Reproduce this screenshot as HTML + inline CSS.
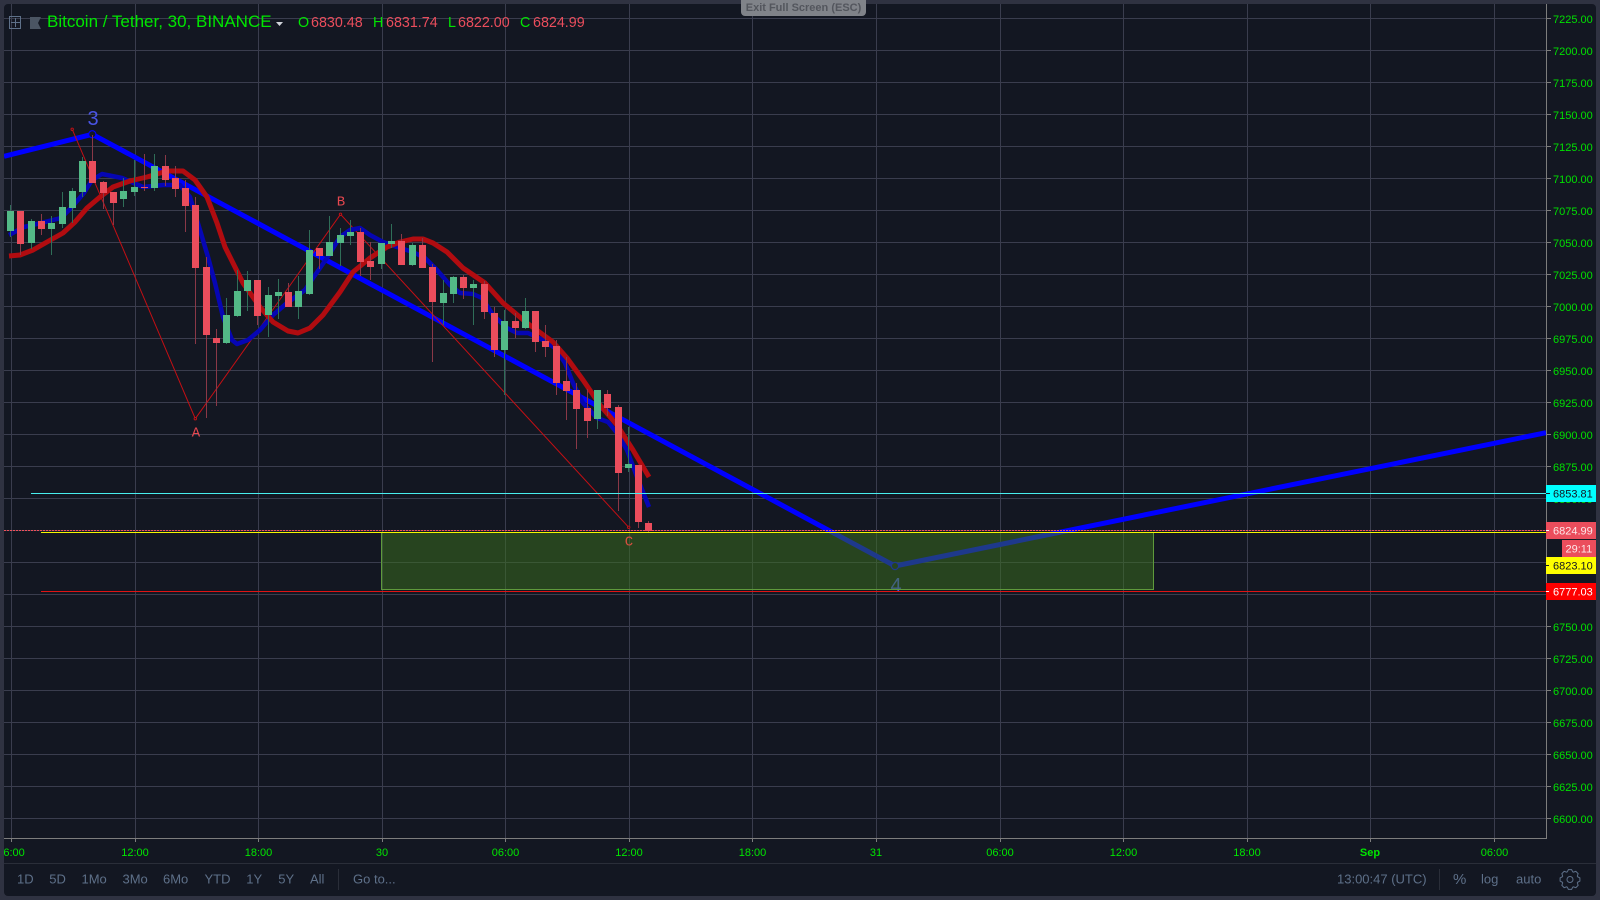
<!DOCTYPE html>
<html lang="en">
<head>
<meta charset="utf-8">
<title>BTCUSDT chart</title>
<style>
html,body{margin:0;padding:0;width:1600px;height:900px;overflow:hidden;background:#2f3241}
svg{display:block;font-family:"Liberation Sans",sans-serif}
.g{stroke:#3a3d4e;stroke-width:1;fill:none;shape-rendering:crispEdges}
.p text{font-size:11px;fill:#00e000}
.t text{font-size:11px;fill:#00e600;text-anchor:middle}
.b text{font-size:13px;fill:#5e7089}
.v{font-size:14.3px;fill:#eb4d5c}
.l{font-size:14.3px;fill:#00e600}
</style>
</head>
<body>
<svg width="1600" height="900" viewBox="0 0 1600 900" xmlns="http://www.w3.org/2000/svg">
<defs><clipPath id="c"><rect x="4" y="4" width="1592" height="892" rx="4"/></clipPath></defs>
<rect width="1600" height="900" fill="#2f3241"/>
<rect x="4" y="4" width="1592" height="892" rx="4" fill="#131722"/>
<g clip-path="url(#c)">
<!-- grid -->
<path class="g" d="M4 18.5H1546M4 50.5H1546M4 82.5H1546M4 114.5H1546M4 146.5H1546M4 178.5H1546M4 210.5H1546M4 242.5H1546M4 274.5H1546M4 306.5H1546M4 338.5H1546M4 370.5H1546M4 402.5H1546M4 434.5H1546M4 466.5H1546M4 498.5H1546M4 530.5H1546M4 562.5H1546M4 594.5H1546M4 626.5H1546M4 658.5H1546M4 690.5H1546M4 722.5H1546M4 754.5H1546M4 786.5H1546M4 818.5H1546"/>
<path class="g" d="M11.5 4V838M135.5 4V838M258.5 4V838M382.5 4V838M505.5 4V838M629.5 4V838M752.5 4V838M876.5 4V838M1000.5 4V838M1123.5 4V838M1247.5 4V838M1370.5 4V838M1494.5 4V838"/>

<!-- thick blue wave -->
<polyline points="4,156.3 92.3,134.3 895,566 1546,432.7" fill="none" stroke="#0000ff" stroke-width="5" stroke-linejoin="round"/>
<circle cx="92.3" cy="134.3" r="3.6" fill="#131722" stroke="#0000ff" stroke-width="1.2"/>
<circle cx="895" cy="566" r="3.6" fill="#131722" stroke="#0000ff" stroke-width="1.2"/>

<!-- thin red ABC -->
<polyline points="72.2,129.3 195.3,418.7 340.5,214.3 628.7,527.3" fill="none" stroke="#c40f14" stroke-width="1"/>
<circle cx="72.2" cy="129.3" r="1.2" fill="#131722" stroke="#c01015"/>
<circle cx="195.3" cy="418.7" r="1.2" fill="#131722" stroke="#c01015"/>
<circle cx="340.5" cy="214.3" r="1.2" fill="#131722" stroke="#c01015"/>
<circle cx="628.7" cy="527.3" r="1.2" fill="#131722" stroke="#c01015"/>

<!-- blue MA -->
<polyline fill="none" stroke="#0606b4" stroke-width="4.5" stroke-linejoin="round" stroke-linecap="butt" points="9,235 24,227 41,223 61,218 71,208 84,193 92,180 102,174 122,178 143,187 163,185 180,185 190,197 200,230 208,257 215,283 223,317 232,340 237,344 248,340 260,330 273,315 287,303 305,290 313,278 327,258 340,237 350,230 360,228 370,235 383,242 397,247 413,252 425,258 437,270 450,285 460,293 473,294 482,298 493,315 507,328 517,333 528,333 543,340 555,348 565,363 573,383 583,403 597,418 608,422 617,433 627,450 637,477 649,507"/>
<!-- red MA -->
<polyline fill="none" stroke="#b10c10" stroke-width="5" stroke-linejoin="round" stroke-linecap="butt" points="9,256 20,255 33,250 47,242 63,233 75,222 87,208 100,197 113,187 130,181 147,177 167,171 183,171 195,180 207,197 217,223 225,247 243,283 260,307 273,322 288,331 298,333 310,328 323,315 340,292 353,272 370,258 387,247 400,242 413,239 423,239 433,243 447,252 463,268 485,283 503,303 527,323 553,342 567,358 583,380 600,405 617,425 633,450 649,477"/>

<!-- wicks -->
<path fill="none" stroke="#2f6e58" stroke-width="1" shape-rendering="crispEdges" d="M10.5 205V237M31.5 219V249M51.5 216V255M62.5 192V228M72.5 188V223M82.5 157V197M123.5 178V207M134.5 160V196M154.5 154V191M226.5 298V344M237.5 270V317M247.5 271V311M268.5 287V337M278.5 279V319M298.5 276V319M309.5 230V295M329.5 216V256M340.5 228V266M350.5 220V245M381.5 243V269M391.5 224V248M412.5 243V266M443.5 280V325M453.5 276V303M473.5 280V325M504.5 310V395M525.5 298V329M597.5 390V429M628.5 427V472"/>
<path fill="none" stroke="#8a3847" stroke-width="1" shape-rendering="crispEdges" d="M20.5 211V255M41.5 214V235M92.5 135V183M103.5 181V209M113.5 192V225M144.5 154V191M165.5 155V186M175.5 166V197M185.5 180V232M195.5 197V344M206.5 257V418M216.5 329V406M257.5 280V325M288.5 283V307M319.5 248V269M360.5 228V276M370.5 242V280M401.5 234V265M422.5 238V268M432.5 264V362M463.5 275V299M484.5 281V319M494.5 307V357M515.5 313V338M535.5 311V352M545.5 325V357M556.5 340V395M566.5 357V420M576.5 383V449M587.5 389V438M607.5 390V416M618.5 405V511M638.5 465V528M648.5 521V533"/>
<!-- bodies -->
<path fill="#53b987" shape-rendering="crispEdges" d="M7 211h7V231h-7zM28 221h7V243h-7zM48 223h7V229h-7zM59 207h7V224h-7zM69 191h7V208h-7zM79 161h7V192h-7zM120 191h7V199h-7zM131 187h7V192h-7zM151 166h7V188h-7zM223 315h7V343h-7zM234 291h7V316h-7zM244 280h7V291h-7zM265 295h7V315h-7zM275 292h7V296h-7zM295 291h7V307h-7zM306 250h7V294h-7zM326 242h7V256h-7zM337 235h7V243h-7zM347 232h7V236h-7zM378 243h7V264h-7zM388 241h7V244h-7zM409 245h7V265h-7zM440 293h7V303h-7zM450 277h7V294h-7zM470 284h7V288h-7zM501 321h7V350h-7zM522 311h7V328h-7zM594 390h7V419h-7zM625 464h7V468h-7z"/>
<path fill="#eb4d5c" shape-rendering="crispEdges" d="M17 211h7V244h-7zM38 221h7V229h-7zM89 161h7V183h-7zM100 182h7V193h-7zM110 192h7V203h-7zM141 187h7V188h-7zM162 166h7V180h-7zM172 178h7V189h-7zM182 188h7V206h-7zM192 205h7V268h-7zM203 267h7V335h-7zM213 338h7V343h-7zM254 280h7V316h-7zM285 292h7V307h-7zM316 248h7V256h-7zM357 232h7V262h-7zM367 261h7V267h-7zM398 241h7V265h-7zM419 245h7V268h-7zM429 267h7V302h-7zM460 277h7V288h-7zM481 284h7V312h-7zM491 313h7V350h-7zM512 321h7V328h-7zM532 311h7V342h-7zM542 341h7V347h-7zM553 346h7V383h-7zM563 381h7V391h-7zM573 390h7V409h-7zM584 408h7V421h-7zM604 394h7V408h-7zM615 407h7V473h-7zM635 465h7V522h-7zM645 523h7V531h-7z"/>

<!-- labels under rect -->
<text x="93" y="125" font-size="20" fill="#4a55e6" text-anchor="middle">3</text>
<text x="896" y="592" font-size="20" fill="#4a55e6" text-anchor="middle">4</text>
<text x="196" y="436.5" font-size="14" fill="#e6474f" text-anchor="middle" font-family="Liberation Mono, monospace">A</text>
<text x="341" y="205.5" font-size="14" fill="#e6474f" text-anchor="middle" font-family="Liberation Mono, monospace">B</text>

<!-- target rect -->
<rect x="381.5" y="532.5" width="772" height="57" fill="#3a6f1e" fill-opacity="0.51" stroke="#5f9a3c" stroke-width="1" shape-rendering="crispEdges"/>
<text x="629" y="545.5" font-size="14" fill="#d85040" text-anchor="middle" font-family="Liberation Mono, monospace">C</text>

<!-- horizontal lines -->
<g shape-rendering="crispEdges">
<path d="M31 493.5H1546" stroke="#48eeee" stroke-width="1"/>
<path d="M4 530.5H1546" stroke="#f0505c" stroke-width="1" stroke-dasharray="2 1"/>
<path d="M41 532.5H1546" stroke="#f5f500" stroke-width="1"/>
<path d="M41 591.5H1546" stroke="#e01414" stroke-width="1"/>
</g>

<!-- header -->
<g fill="none" stroke="#5e7089" stroke-width="1" shape-rendering="crispEdges">
<rect x="9.5" y="16.5" width="11" height="12"/>
<path d="M15.5 18V27M11 22.5H20"/>
</g>
<path d="M30 17H41L38 23L41 29H30Z" fill="#4b5563"/>
<text x="47" y="27" font-size="17" fill="#00e600">Bitcoin / Tether, 30, BINANCE</text>
<path d="M276 22h7l-3.5 4z" fill="#d0d3da"/>
<text class="l" x="298" y="27">O</text><text class="v" x="311" y="27">6830.48</text>
<text class="l" x="373" y="27">H</text><text class="v" x="386" y="27">6831.74</text>
<text class="l" x="448" y="27">L</text><text class="v" x="458" y="27">6822.00</text>
<text class="l" x="520" y="27">C</text><text class="v" x="533" y="27">6824.99</text>

<!-- axes -->
<path d="M1546.5 4V838.5H4" fill="none" stroke="#7d7d7d" stroke-width="1" shape-rendering="crispEdges"/>
<path fill="none" stroke="#7d7d7d" stroke-width="1" shape-rendering="crispEdges" d="M1547 18.5h4M1547 50.5h4M1547 82.5h4M1547 114.5h4M1547 146.5h4M1547 178.5h4M1547 210.5h4M1547 242.5h4M1547 274.5h4M1547 306.5h4M1547 338.5h4M1547 370.5h4M1547 402.5h4M1547 434.5h4M1547 466.5h4M1547 626.5h4M1547 658.5h4M1547 690.5h4M1547 722.5h4M1547 754.5h4M1547 786.5h4M1547 818.5h4M11.5 838v4M135.5 838v4M258.5 838v4M382.5 838v4M505.5 838v4M629.5 838v4M752.5 838v4M876.5 838v4M1000.5 838v4M1123.5 838v4M1247.5 838v4M1370.5 838v4M1494.5 838v4"/>
<g class="p">
<text x="1553" y="23">7225.00</text><text x="1553" y="55">7200.00</text><text x="1553" y="87">7175.00</text><text x="1553" y="119">7150.00</text><text x="1553" y="151">7125.00</text><text x="1553" y="183">7100.00</text><text x="1553" y="215">7075.00</text><text x="1553" y="247">7050.00</text><text x="1553" y="279">7025.00</text><text x="1553" y="311">7000.00</text><text x="1553" y="343">6975.00</text><text x="1553" y="375">6950.00</text><text x="1553" y="407">6925.00</text><text x="1553" y="439">6900.00</text><text x="1553" y="471">6875.00</text><text x="1553" y="503">6850.00</text><text x="1553" y="631">6750.00</text><text x="1553" y="663">6725.00</text><text x="1553" y="695">6700.00</text><text x="1553" y="727">6675.00</text><text x="1553" y="759">6650.00</text><text x="1553" y="791">6625.00</text><text x="1553" y="823">6600.00</text>
</g>

<!-- price badges -->
<rect x="1546" y="485" width="50" height="17" fill="#00ffff"/>
<path d="M1546 493.5h4" stroke="#131722" shape-rendering="crispEdges"/>
<text x="1553" y="497.5" font-size="11" fill="#131722">6853.81</text>
<rect x="1546" y="522" width="50" height="17" fill="#eb4d5c"/>
<path d="M1546 530.5h3" stroke="#fff" shape-rendering="crispEdges"/>
<text x="1553" y="534.5" font-size="11" fill="#fde8ea">6824.99</text>
<rect x="1562" y="540" width="34" height="17" fill="#eb4d5c"/>
<text x="1565.5" y="552.5" font-size="11" fill="#fde8ea">29:11</text>
<rect x="1546" y="557" width="50" height="17" fill="#ffff00"/>
<path d="M1546 565.5h3" stroke="#131722" shape-rendering="crispEdges"/>
<text x="1553" y="569.5" font-size="11" fill="#131722">6823.10</text>
<rect x="1546" y="583" width="50" height="17" fill="#ff0000"/>
<path d="M1546 591.5h3" stroke="#fff" shape-rendering="crispEdges"/>
<text x="1553" y="595.5" font-size="11" fill="#fff">6777.03</text>

<!-- time axis -->
<g class="t">
<text x="11" y="856">06:00</text><text x="135" y="856">12:00</text><text x="258.5" y="856">18:00</text><text x="382" y="856">30</text><text x="505.5" y="856">06:00</text><text x="629" y="856">12:00</text><text x="752.5" y="856">18:00</text><text x="876" y="856">31</text><text x="1000" y="856">06:00</text><text x="1123.5" y="856">12:00</text><text x="1247" y="856">18:00</text><text x="1370" y="856" font-weight="bold">Sep</text><text x="1494.5" y="856">06:00</text>
</g>

<!-- bottom toolbar -->
<path d="M4 863.5H1596" stroke="#2a2e39" stroke-width="1" shape-rendering="crispEdges"/>
<g class="b">
<text x="17" y="883.5">1D</text><text x="49.3" y="883.5">5D</text><text x="81.5" y="883.5">1Mo</text><text x="122.5" y="883.5">3Mo</text><text x="163" y="883.5">6Mo</text><text x="204.5" y="883.5">YTD</text><text x="246.3" y="883.5">1Y</text><text x="278.3" y="883.5">5Y</text><text x="310" y="883.5">All</text><text x="353" y="883.5">Go to...</text>
<text x="1337" y="883.5">13:00:47 (UTC)</text><text x="1453" y="884" style="font-size:15px">%</text><text x="1481" y="883.5">log</text><text x="1516" y="883.5">auto</text>
</g>
<path d="M338.5 869V890M1439.5 869V890" stroke="#2a2e39" stroke-width="1" shape-rendering="crispEdges"/>
<g transform="translate(1570 879.5)" fill="none" stroke="#5e7089" stroke-width="1">
<path d="M-3 -7.2L-1.6 -9.9H1.6L3 -7.2"/>
<path transform="rotate(45)" d="M-3 -7.2L-1.6 -9.9H1.6L3 -7.2"/>
<path transform="rotate(90)" d="M-3 -7.2L-1.6 -9.9H1.6L3 -7.2"/>
<path transform="rotate(135)" d="M-3 -7.2L-1.6 -9.9H1.6L3 -7.2"/>
<path transform="rotate(180)" d="M-3 -7.2L-1.6 -9.9H1.6L3 -7.2"/>
<path transform="rotate(225)" d="M-3 -7.2L-1.6 -9.9H1.6L3 -7.2"/>
<path transform="rotate(270)" d="M-3 -7.2L-1.6 -9.9H1.6L3 -7.2"/>
<path transform="rotate(315)" d="M-3 -7.2L-1.6 -9.9H1.6L3 -7.2"/>
<circle r="3"/>
</g>
</g>

<!-- fullscreen hint -->
<path d="M741 0H866V12a4 4 0 0 1-4 4H745a4 4 0 0 1-4-4Z" fill="#808389"/>
<text x="803.5" y="11" font-size="11" font-weight="bold" fill="#53565d" text-anchor="middle">Exit Full Screen (ESC)</text>
</svg>
</body>
</html>
